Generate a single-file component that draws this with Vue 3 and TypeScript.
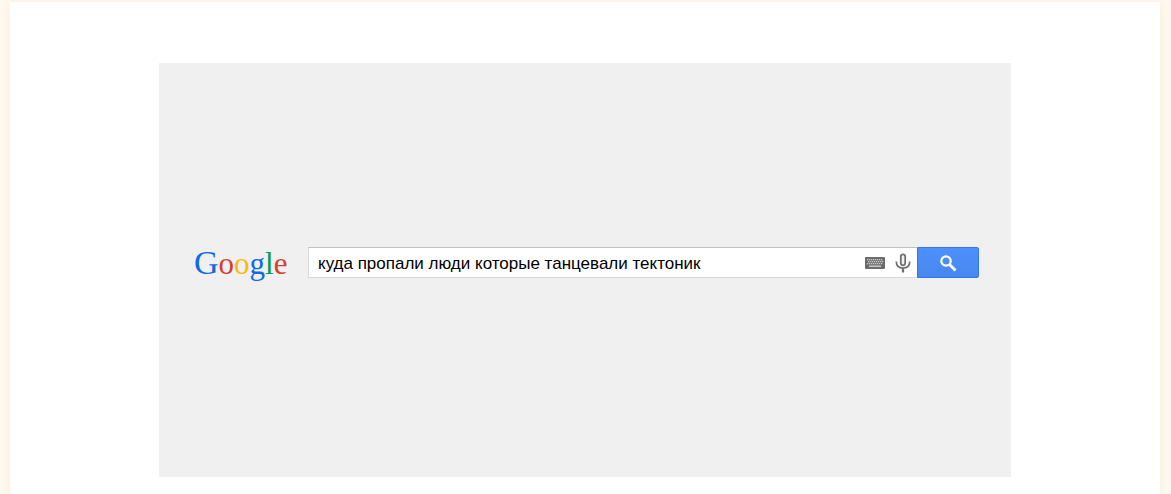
<script setup lang="ts">
import { ref } from 'vue'

const query = ref<string>('куда пропали люди которые танцевали тектоник')

const letters: { char: string; tone: string }[] = [
  { char: 'G', tone: 'blue cap' },
  { char: 'o', tone: 'red' },
  { char: 'o', tone: 'yellow' },
  { char: 'g', tone: 'blue' },
  { char: 'l', tone: 'green' },
  { char: 'e', tone: 'red' },
]

const keyRows: { y: number; xs: number[] }[] = [
  { y: 2, xs: [2, 4, 6, 8, 10, 12, 14, 16] },
  { y: 4, xs: [3, 5, 7, 9, 11, 13, 15, 17] },
  { y: 6, xs: [2, 4, 6, 8, 10, 12, 14, 16] },
]
</script>

<template>
  <main class="sheet">
    <section class="panel">
      <form class="search" role="search" @submit.prevent>
        <a class="logo" href="#" aria-label="Google"><span v-for="(l, i) in letters" :key="i" :class="l.tone">{{ l.char }}</span></a>
        <div class="field">
          <input v-model="query" class="query" type="text" aria-label="Поиск" autocomplete="off" spellcheck="false" />
          <button class="tool" type="button" aria-label="Экранная клавиатура">
            <svg width="20" height="12" viewBox="0 0 20 12">
              <rect width="20" height="12" rx="1" fill="#6c6c6c" />
              <g fill="#c8c8c8">
                <template v-for="row in keyRows" :key="row.y">
                  <rect v-for="x in row.xs" :key="x" :x="x" :y="row.y" width="1.300" height="1.300" />
                </template>
                <rect x="4" y="8.500" width="12" height="1.500" />
              </g>
            </svg>
          </button>
          <button class="tool" type="button" aria-label="Голосовой поиск">
            <svg width="16" height="20" viewBox="0 0 16 20" fill="none" stroke="#707070">
              <rect x="5.8" y="1.3" width="4.4" height="11" rx="2.2" fill="#f2f2f2" stroke-width="1.8" />
              <path d="M1.3 8.5C1.3 12.7 4 15 8 15s6.700-2.300 6.700-6.500" stroke-width="1.700" />
              <path d="M8 15v4.500" stroke-width="2.200" />
            </svg>
          </button>
        </div>
        <button class="submit" type="submit" aria-label="Найти">
          <svg width="18" height="18" viewBox="0 0 18 18" fill="none" stroke="#fff">
            <circle cx="7" cy="7" r="4.700" stroke-width="2.200" />
            <path d="M10.500 10.500L16.500 16.500" stroke-width="2.800" />
          </svg>
        </button>
      </form>
    </section>
  </main>
</template>

<style>
body {
  background: #fff9ef;
}
</style>

<style scoped>
.sheet {
  box-sizing: border-box;
  min-height: calc(100vh - 2px);
  margin: 2px 11px 0 10px;
  padding: 61px 24px 17px;
  background: #fff;
  box-shadow: 0 0 10px #f6ecda;
}

.panel {
  display: flex;
  align-items: center;
  box-sizing: border-box;
  max-width: 852px;
  min-height: 414px;
  margin: 0 auto;
  padding: 0 32px 15px 35px;
  background: #f0f0f0;
}

.search {
  display: flex;
  align-items: center;
  flex: 1;
  min-width: 0;
}

.logo {
  flex: none;
  width: 114px;
  font: 31px/31px "Liberation Serif", serif;
  text-decoration: none;
  white-space: nowrap;
}

.cap {
  font-size: 34px;
}

.blue {
  color: #1069e8;
}

.red {
  color: #d9402a;
}

.yellow {
  color: #fbb90b;
}

.green {
  color: #0b9b50;
}

.field {
  display: flex;
  align-items: center;
  box-sizing: border-box;
  flex: 1;
  min-width: 0;
  height: 31px;
  padding: 0 6px 0 9px;
  background: #fff;
  border: 1px solid #d9d9d9;
  border-top-color: #c0c0c0;
  border-right: 0;
}

.query {
  flex: 1;
  min-width: 0;
  height: 28px;
  padding: 2px 0 0;
  border: 0;
  outline: 0;
  background: transparent;
  color: #000;
  font: 17px/20px "Liberation Sans", Arial, sans-serif;
}

.tool {
  display: flex;
  flex: none;
  padding: 0;
  border: 0;
  background: none;
  cursor: pointer;
}

.tool + .tool {
  margin-left: 10px;
}

.submit {
  display: flex;
  align-items: center;
  justify-content: center;
  box-sizing: border-box;
  flex: none;
  width: 62px;
  height: 31px;
  padding: 0;
  border: 1px solid #3079ed;
  border-radius: 0 2px 2px 0;
  background: linear-gradient(#4d90fe, #4787ed);
  cursor: pointer;
}
</style>
